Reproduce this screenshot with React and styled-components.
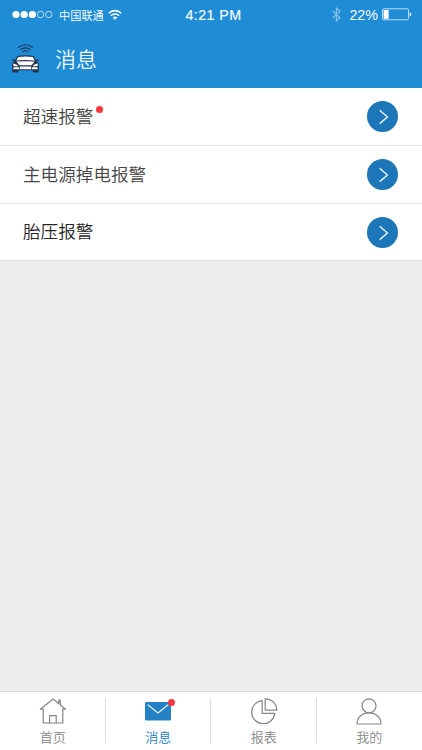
import React from 'react';
import styled, { createGlobalStyle } from 'styled-components';

const colors = {
  header: '#1f8cd6',
  circle: '#1c76b8',
  active: '#2581c6',
  red: '#f8363b',
  navy: '#20314f',
  line: '#dcddde',
  pageBg: '#edeef0',
  icon: '#868686'
};

const GlobalStyle = createGlobalStyle`
  * {
    box-sizing: border-box;
  }
  body {
    margin: 0;
    font-family: 'Liberation Sans', 'Noto Sans CJK SC', sans-serif;
  }
  svg {
    display: block;
    flex: none;
  }
`;

const Screen = styled.div`
  display: flex;
  flex-direction: column;
  width: 100%;
  height: 100vh;
  overflow: hidden;
  background-color: ${colors.pageBg};
`;

const Header = styled.header`
  height: 88px;
  background-color: ${colors.header};
  color: #f4faff;
`;

const StatusBar = styled.div`
  display: grid;
  grid-template-columns: 1fr auto 1fr;
  align-items: center;
  height: 29px;
  padding: 0 10px 0 12px;
`;

const StatusSide = styled.div`
  display: flex;
  align-items: center;
  height: 29px;
  ${props => props.$right && `
    justify-content: flex-end;
  `}
`;

const Carrier = styled.span`
  margin: 0 4px 0 6px;
  font: 400 11.2px/16px 'Noto Sans CJK SC', sans-serif;
`;

const Clock = styled.span`
  padding-left: 3px;
  font-size: 14.3px;
  line-height: 16px;
  letter-spacing: 0.4px;
  -webkit-text-stroke: 0.2px currentColor;
`;

const Percent = styled.span`
  margin: 0 4px 0 8px;
  font-size: 14.3px;
  line-height: 16px;
`;

const TitleBar = styled.div`
  display: flex;
  align-items: center;
  height: 57px;
  padding-left: 10px;
`;

const Title = styled.h1`
  margin: 0 0 0 14px;
  font: 350 21px/30px 'Noto Sans CJK SC DemiLight', 'Noto Sans CJK SC', sans-serif;
`;

const List = styled.ul`
  flex: 1;
  margin: 0;
  padding: 0;
  list-style: none;
`;

const Row = styled.li`
  display: flex;
  align-items: center;
  justify-content: space-between;
  height: ${props => props.$height}px;
  padding: 0 24px 0 23px;
  border-bottom: 1px solid #e4e4e5;
  background-color: #fff;
  &:last-child {
    border-bottom-color: ${colors.line};
  }
`;

const RowLabel = styled.span`
  position: relative;
  padding-bottom: 2px;
  color: ${props => (props.$dark ? '#262626' : '#444')};
  font: 350 17.6px/26px 'Noto Sans CJK SC DemiLight', 'Noto Sans CJK SC', sans-serif;
`;

const Dot = styled.i`
  position: absolute;
  top: ${props => props.$top}px;
  right: ${props => props.$right}px;
  width: 7px;
  height: 7px;
  border-radius: 50%;
  background-color: ${colors.red};
`;

const ArrowButton = styled.button`
  display: flex;
  align-items: center;
  justify-content: center;
  width: 31px;
  height: 31px;
  padding: 0;
  border: 0;
  border-radius: 50%;
  background-color: ${colors.circle};
`;

const TabBar = styled.nav`
  display: grid;
  grid-template-columns: repeat(4, 1fr);
  height: 59px;
  padding-top: 6px;
  border-top: 1px solid #d6d7d9;
  background-color: #fff;
`;

const Tab = styled.a`
  display: flex;
  flex-direction: column;
  align-items: center;
  height: 45px;
  padding-left: 1px;
  border-right: 1px solid ${colors.line};
  color: ${props => (props.$active ? colors.active : colors.icon)};
  &:last-child {
    border-right-color: transparent;
  }
`;

const TabIcon = styled.span`
  position: relative;
  width: 28px;
  height: 28px;
`;

const TabLabel = styled.span`
  margin-top: 2px;
  font: 350 13px/18px 'Noto Sans CJK SC DemiLight', 'Noto Sans CJK SC', sans-serif;
`;

const SignalIcon = () => (
  <svg width="41" height="9" viewBox="0 0 41 9">
    {[0, 1, 2].map(i => <circle key={i} cx={4 + i * 8.2} cy="4.5" r="3.6" fill="#fff" />)}
    {[3, 4].map(i => (
      <circle key={i} cx={4 + i * 8.2} cy="4.5" r="3.2" fill="none" stroke="#e4f2fc" strokeWidth=".8" />
    ))}
  </svg>
);

const WifiIcon = () => (
  <svg width="14" height="11" viewBox="0 0 14 11" fill="none" stroke="#fff" strokeWidth="1.6">
    <path d="M.8 4.2a8.8 8.8 0 0 1 12.4 0M3 6.6a5.7 5.7 0 0 1 8 0" />
    <path d="M7 10.8 4.8 8.6a3.1 3.1 0 0 1 4.4 0Z" fill="#fff" stroke="none" />
  </svg>
);

const BluetoothIcon = () => (
  <svg width="9" height="15" viewBox="0 0 9 15" fill="none" stroke="#83bfe9" strokeWidth="1.2">
    <path d="M.6 4 8 10.8 4.4 14V1L8 4.2.6 11" />
  </svg>
);

const BatteryIcon = () => (
  <svg width="30" height="13" viewBox="0 0 30 13">
    <rect x=".5" y=".8" width="26" height="11" rx="1.2" fill="none" stroke="#b9dbf3" />
    <rect x="1.6" y="2" width="5" height="8.8" fill="#fff" />
    <path d="M27.6 4.2q1.8.4 1.8 2.1t-1.8 2.1z" fill="#d8ecfa" />
  </svg>
);

const CarIcon = () => (
  <svg width="31" height="31" viewBox="0 0 31 31">
    <g fill="none" stroke={colors.navy} strokeWidth="1.1" strokeLinecap="round">
      <path d="M8.6 5.2q6.9-5 13.8 0M11 7.5q4.5-3.2 9 0M13.2 9.6q2.3-1.6 4.6 0" />
    </g>
    <path d="M2.4 26h6v3.6q0 .9-1 .9h-4q-1 0-1-.9zM22.6 26h6v3.6q0 .9-1 .9h-4q-1 0-1-.9z" fill={colors.navy} />
    <path
      d="M7.4 13.9q8.1-1.2 16.2 0 1.6 2.2 2.7 5 2.4.9 2.6 3.4v6H2.1v-6q.2-2.5 2.6-3.4 1.1-2.8 2.7-5z"
      fill={colors.navy}
    />
    <path d="M2 17.4h3l-.7 1.6H2.6zM29 17.4h-3l.7 1.6h1.7z" fill={colors.navy} />
    <path d="M8.2 15.1q7.3-1 14.6 0l2 3.3q-9.3-.7-18.6 0z" fill="#fff" />
    <path d="M6.4 19.6q9.1-.8 18.2 0l-3 3.6H9.4z" fill="#fff" />
    <path d="M3.3 21.3l4.6 1.9-.5 1.3-4.1-.5zM27.7 21.3l-4.6 1.9.5 1.3 4.1-.5z" fill="#fff" />
    <path d="M3.3 25.2H9v2H3.3zM27.7 25.2H22v2h5.7zM9.8 24.4h11.4v2.8H9.8z" fill="#fff" />
  </svg>
);

const ArrowIcon = () => (
  <svg width="31" height="31" viewBox="0 0 31 31" fill="none" stroke="#e9f4fb" strokeWidth="1.4">
    <path d="M12.7 9.2 20.4 16l-7.7 6.6" />
  </svg>
);

const strokeIcon = { width: 28, height: 28, viewBox: '0 0 28 28', fill: 'none', stroke: colors.icon, strokeWidth: 1.2 };

const HomeIcon = () => (
  <svg {...strokeIcon} strokeLinejoin="round" strokeLinecap="round">
    <path d="M1.4 11.2 14 1l5.8 4.7V2h1.4v4.8l5.4 4.4h-2.8V25H4.2V11.2z" />
    <path d="M10.6 25v-7.4h6.6V25" />
  </svg>
);

const MailIcon = () => (
  <svg width="28" height="28" viewBox="0 0 28 28">
    <rect x="1" y="4" width="26" height="18.5" rx="1.2" fill={colors.active} />
    <path d="M3.8 6.7 14 15 24.2 6.7" fill="none" stroke="#e9f4fb" strokeWidth="1.2" />
  </svg>
);

const ReportIcon = () => (
  <svg {...strokeIcon} strokeLinejoin="round">
    <path d="M12.2 2.6A11.6 11.6 0 1 0 24.8 15.4H12.2z" />
    <path d="M15.2.8A11.4 11.4 0 0 1 26.8 12.2H15.2z" />
  </svg>
);

const UserIcon = () => (
  <svg {...strokeIcon} strokeLinejoin="round">
    <circle cx="14" cy="7.8" r="7" />
    <path d="M2 26C2 19.6 6.8 14.8 14 14.8S26 19.6 26 26z" />
  </svg>
);

const alarms = [
  { label: '超速报警', height: 58, unread: true },
  { label: '主电源掉电报警', height: 58 },
  { label: '胎压报警', height: 57, dark: true }
];

const tabs = [
  { label: '首页', Icon: HomeIcon },
  { label: '消息', Icon: MailIcon, active: true, unread: true },
  { label: '报表', Icon: ReportIcon },
  { label: '我的', Icon: UserIcon }
];

export default function App() {
  return (
    <Screen>
      <GlobalStyle />
      <Header>
        <StatusBar>
          <StatusSide>
            <SignalIcon />
            <Carrier>中国联通</Carrier>
            <WifiIcon />
          </StatusSide>
          <Clock>4:21 PM</Clock>
          <StatusSide $right>
            <BluetoothIcon />
            <Percent>22%</Percent>
            <BatteryIcon />
          </StatusSide>
        </StatusBar>
        <TitleBar>
          <CarIcon />
          <Title>消息</Title>
        </TitleBar>
      </Header>
      <List>
        {alarms.map(alarm => (
          <Row key={alarm.label} $height={alarm.height}>
            <RowLabel $dark={alarm.dark}>
              {alarm.label}
              {alarm.unread && <Dot $top={3} $right={-10} />}
            </RowLabel>
            <ArrowButton aria-label={alarm.label}>
              <ArrowIcon />
            </ArrowButton>
          </Row>
        ))}
      </List>
      <TabBar>
        {tabs.map(({ label, Icon, active, unread }) => (
          <Tab key={label} $active={active}>
            <TabIcon>
              <Icon />
              {unread && <Dot $top={1} $right={-3} />}
            </TabIcon>
            <TabLabel>{label}</TabLabel>
          </Tab>
        ))}
      </TabBar>
    </Screen>
  );
}
